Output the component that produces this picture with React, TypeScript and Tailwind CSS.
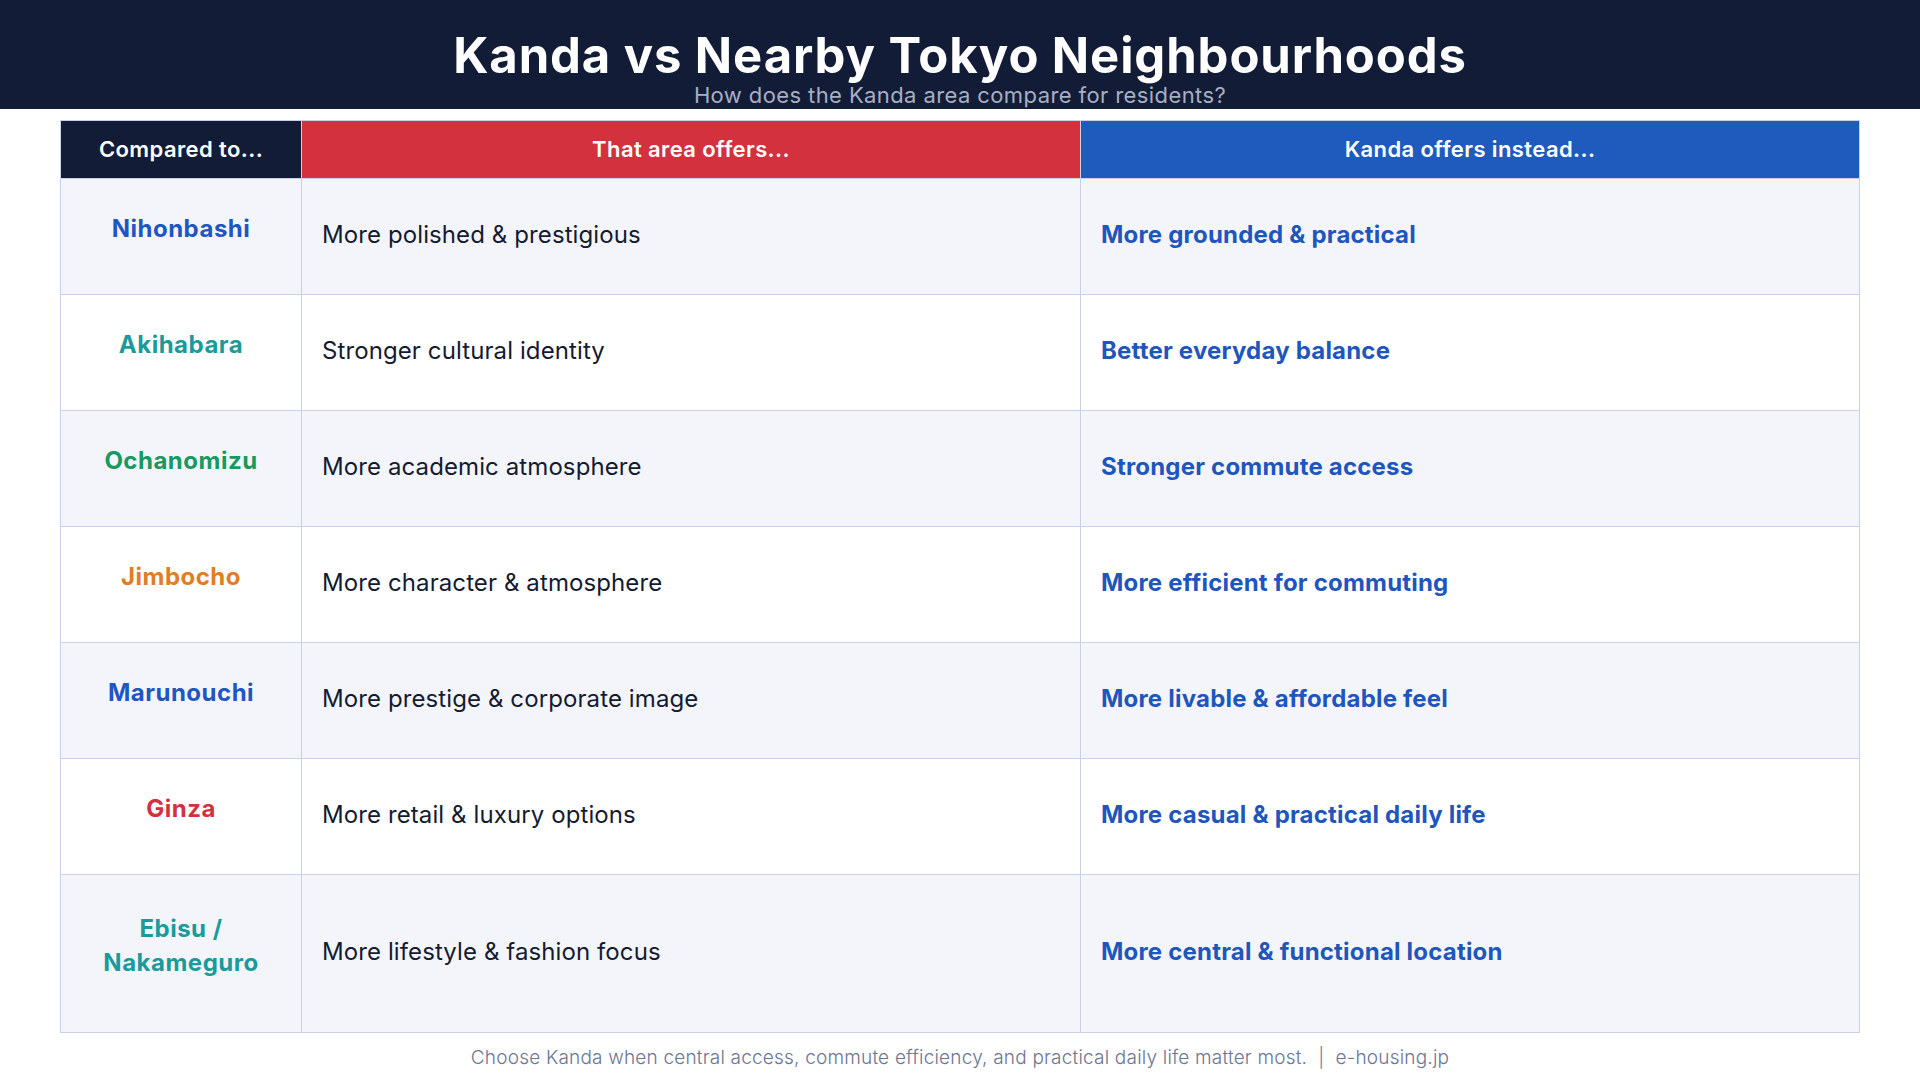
const rows = [
  { name: ["Nihonbashi"], color: "text-[#1f56c0]", offer: "More polished & prestigious", kanda: "More grounded & practical" },
  { name: ["Akihabara"], color: "text-[#1b9a9c]", offer: "Stronger cultural identity", kanda: "Better everyday balance" },
  { name: ["Ochanomizu"], color: "text-[#17995f]", offer: "More academic atmosphere", kanda: "Stronger commute access" },
  { name: ["Jimbocho"], color: "text-[#e27d23]", offer: "More character & atmosphere", kanda: "More efficient for commuting" },
  { name: ["Marunouchi"], color: "text-[#1f56c0]", offer: "More prestige & corporate image", kanda: "More livable & affordable feel" },
  { name: ["Ginza"], color: "text-[#d2313d]", offer: "More retail & luxury options", kanda: "More casual & practical daily life" },
  { name: ["Ebisu /", "Nakameguro"], color: "text-[#1b9a9c]", offer: "More lifestyle & fashion focus", kanda: "More central & functional location" },
];

export default function App() {
  return (
    <div
      className="flex h-[1080px] w-[1920px] flex-col bg-white"
      style={{ fontFamily: "Inter, 'Open Sans', sans-serif" }}
    >
      <header className="flex h-[109px] flex-col items-center bg-[#131c36]">
        <h1 className="mt-[31px] text-[49px] font-bold leading-[50px] tracking-[0.9px] text-white">
          Kanda vs Nearby Tokyo Neighbourhoods
        </h1>
        <p className="mt-[2px] text-[22px] leading-[24px] tracking-[0.4px] text-[#a7afc4]">
          How does the Kanda area compare for residents?
        </p>
      </header>

      <div className="mx-[60px] mt-[11px] grid w-[1800px] grid-cols-[240px_1fr_1fr] border border-[#c8d1e6]">
        <div className="flex h-[57px] items-center justify-center bg-[#131c36] text-[22px] font-semibold tracking-[0.4px] text-white">
          Compared to...
        </div>
        <div className="flex h-[57px] items-center justify-center border-l border-[#c8d1e6] bg-[#d2313d] text-[22px] font-semibold tracking-[0.4px] text-white">
          That area offers...
        </div>
        <div className="flex h-[57px] items-center justify-center border-l border-[#c8d1e6] bg-[#1f5bbd] text-[22px] font-semibold tracking-[0.4px] text-white">
          Kanda offers instead...
        </div>

        {rows.map((row, i) => {
          const bg = i % 2 === 0 ? "bg-[#f4f5fb]" : "bg-white";
          const h = i === rows.length - 1 ? "h-[158px]" : "h-[116px]";
          return (
            <div className="contents" key={row.name.join(" ")}>
              <div className={`flex ${h} flex-col items-center justify-center border-t border-[#c8d1e6] pb-[16px] ${bg}`}>
                {row.name.map((line) => (
                  <span className={`text-[24px] font-bold leading-[34px] tracking-[0.5px] ${row.color}`} key={line}>
                    {line}
                  </span>
                ))}
              </div>
              <div className={`flex ${h} items-center border-l border-t border-[#c8d1e6] pb-[4px] pl-[20px] text-[24px] tracking-[0.1px] text-[#141b30] ${bg}`}>
                {row.offer}
              </div>
              <div className={`flex ${h} items-center border-l border-t border-[#c8d1e6] pb-[4px] pl-[20px] text-[24px] font-bold tracking-[0.2px] text-[#1e56bd] ${bg}`}>
                {row.kanda}
              </div>
            </div>
          );
        })}
      </div>

      <p className="mt-[13px] text-center text-[19px] font-light leading-[24px] tracking-[0.2px] text-[#6b7592]">
        Choose Kanda when central access, commute efficiency, and practical daily life matter most.&nbsp; |&nbsp; e-housing.jp
      </p>
    </div>
  );
}
